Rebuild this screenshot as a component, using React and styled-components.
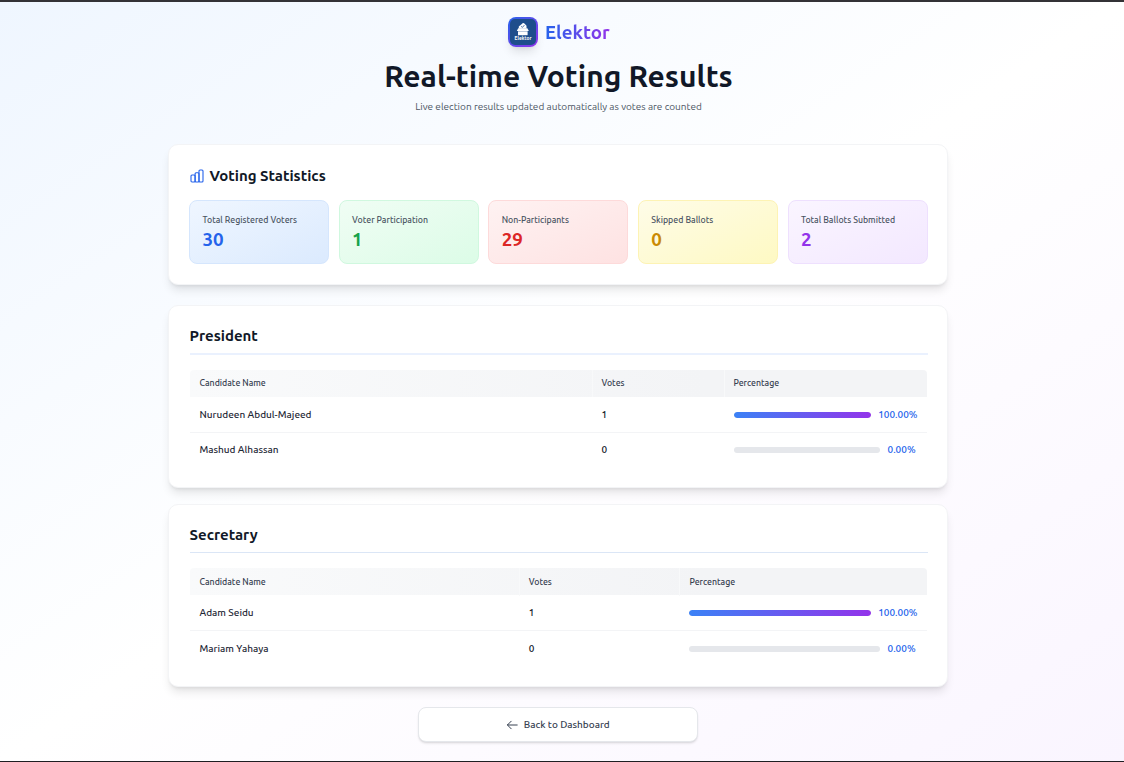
import React from "react";
import styled, { createGlobalStyle } from "styled-components";

const GlobalStyle = createGlobalStyle`
  * { box-sizing: border-box; }
  body {
    margin: 0;
    font-family: Ubuntu, "Noto Sans", "Open Sans", sans-serif;
    color: #111827;
  }
  h1, h2, p { margin: 0; }
`;

const Page = styled.div`
  height: 762px;
  overflow: hidden;
  display: flex;
  flex-direction: column;
  align-items: center;
  padding: 15px 7px 0 0;
  border-top: 2px solid #333236;
  border-bottom: 1px solid #1f1e22;
  background: linear-gradient(to bottom right, #eff6ff 0%, #ffffff 50%, #faf5ff 100%);
`;

const Brand = styled.div`
  display: flex;
  align-items: center;
  gap: 7px;
  height: 30px;
  padding-left: 0.6px;
`;

const LogoFrame = styled.div`
  display: flex;
  width: 30px;
  height: 30px;
  padding: 2px;
  border-radius: 8px;
  background: linear-gradient(to bottom right, #2563eb, #9333ea);
  box-shadow: 0 7px 10px -2px rgba(0, 0, 0, 0.1), 0 3px 4px -3px rgba(0, 0, 0, 0.1);
`;

const BrandName = styled.span`
  padding-top: 2px;
  font-size: 18.75px;
  line-height: 28px;
  font-weight: 700;
  color: transparent;
  background: linear-gradient(to right, #2563eb, #9333ea);
  background-clip: text;
  -webkit-background-clip: text;
`;

const PageTitle = styled.h1`
  margin-top: 12px;
  font-size: 30px;
  line-height: 34px;
  font-weight: 700;
  white-space: nowrap;
`;

const Subtitle = styled.p`
  margin-top: 6px;
  font-size: 10px;
  line-height: 16px;
  color: #4b5563;
  white-space: nowrap;
`;

const Content = styled.main`
  display: flex;
  flex-direction: column;
  width: 780px;
  margin: 29px 1px 0 0;
`;

const Card = styled.section`
  height: ${(p) => p.$height}px;
  margin-bottom: ${(p) => p.$gap}px;
  padding: 20px 19.5px 0 20.5px;
  border: 1px solid #f3f4f6;
  border-radius: 10px;
  background: #fff;
  box-shadow: 0 7px 10px -2px rgba(0, 0, 0, 0.1), 0 3px 4px -3px rgba(0, 0, 0, 0.12);
`;

const StatsHeading = styled.h2`
  display: flex;
  align-items: center;
  gap: 6px;
  height: 21px;
  font-size: 15px;
  line-height: 21px;
  font-weight: 700;
  white-space: nowrap;
`;

const StatGrid = styled.div`
  display: grid;
  grid-template-columns: repeat(5, 140.1px);
  gap: 9.5px;
  margin: 14px 0 0 -0.3px;
`;

const StatCard = styled.div`
  height: 64px;
  padding: 13px 0 0 12.3px;
  border: 1px solid ${(p) => p.$tone.border};
  border-radius: 8px;
  background: linear-gradient(to bottom right, ${(p) => p.$tone.from}, ${(p) => p.$tone.to});
`;

const StatLabel = styled.p`
  font-size: 8.75px;
  line-height: 13px;
  font-weight: 500;
  color: #4b5563;
  white-space: nowrap;
`;

const StatValue = styled.p`
  margin-top: 2px;
  font-size: 18.75px;
  line-height: 22px;
  font-weight: 700;
  color: ${(p) => p.$color};
`;

const PositionHeading = styled.h2`
  height: ${(p) => (p.$rule === 2 ? 29 : 28)}px;
  font-size: 15px;
  line-height: 20px;
  font-weight: 700;
  border-bottom: ${(p) => p.$rule}px solid ${(p) => (p.$rule === 2 ? "#eaf1fe" : "#dbe6f6")};
`;

const Table = styled.div`
  margin: 15px 0.2px 0 0;
`;

const TableRow = styled.div`
  display: grid;
  grid-template-columns: ${(p) => p.$columns};
  align-items: center;
  height: ${(p) => p.$height}px;
  border-bottom: ${(p) => (p.$divided ? "1px solid #f3f4f6" : "none")};
`;

const TableHead = styled(TableRow)`
  height: 27px;
  align-items: stretch;
  border-radius: 4px 4px 0 0;
  background: linear-gradient(to right, #f9fafb, #f3f4f6 70%);
`;

const HeadCell = styled.div`
  padding-left: 10px;
  font-size: 8.75px;
  line-height: ${(p) => p.$line}px;
  font-weight: 500;
  color: #374151;
  & + & { box-shadow: inset 1px 0 0 #f8f9fa; }
`;

const Cell = styled.div`
  padding-left: 10px;
  font-size: 10px;
  line-height: 14px;
  font-weight: 500;
  color: ${(p) => (p.$strong ? "#111827" : "#1f2937")};
  white-space: nowrap;
`;

const ShareCell = styled.div`
  display: flex;
  align-items: center;
  gap: 7.5px;
  padding: 0 9.8px 0 10px;
`;

const Track = styled.div`
  flex: 1;
  height: 6px;
  border-radius: 3px;
  overflow: hidden;
  background: #e5e7eb;
`;

const Fill = styled.div`
  height: 100%;
  border-radius: 3px;
  background: linear-gradient(to right, #3b82f6, #9333ea);
`;

const ShareText = styled.span`
  min-width: 30px;
  font-size: 10px;
  line-height: 14px;
  font-weight: 500;
  color: #2563eb;
`;

const BackButton = styled.button`
  display: flex;
  align-items: center;
  justify-content: center;
  gap: 5.5px;
  align-self: center;
  width: 280px;
  height: 35px;
  padding: 0;
  font: 500 10px/14px Ubuntu, "Noto Sans", "Open Sans", sans-serif;
  color: #374151;
  background: #fff;
  border: 1px solid #e5e7eb;
  border-radius: 8px;
  box-shadow: 0 2px 3px -1px rgba(0, 0, 0, 0.14), 0 1px 2px -1px rgba(0, 0, 0, 0.1);
`;

const Logo = () => (
  <svg width="26" height="26" viewBox="0 0 26 26">
    <rect width="26" height="26" rx="5" fill="#1e4e8c" />
    <path d="M8.8 9.4V7.6l3.6-3.1c.7-.6 1.4-.5 2 .1l2.1 2.2v2.6z" fill="#fff" />
    <path d="M11.2 7.3l1.2 1.1 2-2.3" fill="none" stroke="#1e4e8c" strokeWidth=".8" />
    <path d="M8.2 9.3h9.2l1.4 2.6H6.8z" fill="#fff" />
    <path d="M8 12.3h9.6v3.9H8z" fill="#fff" />
    <text x="13" y="20.9" textAnchor="middle" fontFamily="Ubuntu, sans-serif" fontSize="4.8" fontWeight="700" fill="#fff" textLength="17">
      Elektor
    </text>
  </svg>
);

const BarsIcon = () => (
  <svg width="14" height="14" viewBox="0 0 14 14" fill="none" stroke="#2563eb" strokeWidth="1.1" strokeLinejoin="round">
    <rect x="1" y="6" width="4.1" height="7" rx="1" />
    <rect x="5.1" y="3.7" width="3.9" height="9.3" rx="1" />
    <rect x="9" y="1" width="4" height="12" rx="1" />
  </svg>
);

const ArrowIcon = () => (
  <svg width="12" height="12" viewBox="0 0 12 12" fill="none" stroke="#374151" strokeWidth="1" strokeLinecap="round" strokeLinejoin="round">
    <path d="M5.2 2.2 1.4 6l3.8 3.8M1.4 6h9.8" />
  </svg>
);

const stats = [
  { label: "Total Registered Voters", value: 30, tone: { from: "#eff6ff", to: "#dbeafe", border: "#d5e6fd", text: "#2563eb" } },
  { label: "Voter Participation", value: 1, tone: { from: "#f0fdf4", to: "#dcfce7", border: "#d0f8df", text: "#16a34a" } },
  { label: "Non-Participants", value: 29, tone: { from: "#fef2f2", to: "#fee2e2", border: "#fddada", text: "#dc2626" } },
  { label: "Skipped Ballots", value: 0, tone: { from: "#fefce8", to: "#fef9c3", border: "#fdf3b4", text: "#ca8a04" } },
  { label: "Total Ballots Submitted", value: 2, tone: { from: "#faf5ff", to: "#f3e8ff", border: "#eee0fe", text: "#9333ea" } },
];

const positions = [
  {
    title: "President",
    rule: 2,
    height: 183,
    gap: 16,
    columns: "402px 132px 1fr",
    headLine: 27,
    rows: [
      { name: "Nurudeen Abdul-Majeed", votes: 1, share: 100, height: 36 },
      { name: "Mashud Alhassan", votes: 0, share: 0, height: 34 },
    ],
  },
  {
    title: "Secretary",
    rule: 1,
    height: 183,
    gap: 20,
    columns: "329.3px 160.7px 1fr",
    headLine: 28,
    rows: [
      { name: "Adam Seidu", votes: 1, share: 100, height: 36 },
      { name: "Mariam Yahaya", votes: 0, share: 0, height: 35 },
    ],
  },
];

function PositionCard({ position }) {
  const { title, rule, height, gap, columns, headLine, rows } = position;
  return (
    <Card $height={height} $gap={gap}>
      <PositionHeading $rule={rule}>{title}</PositionHeading>
      <Table>
        <TableHead $columns={columns}>
          <HeadCell $line={headLine}>Candidate Name</HeadCell>
          <HeadCell $line={headLine}>Votes</HeadCell>
          <HeadCell $line={headLine}>Percentage</HeadCell>
        </TableHead>
        {rows.map((row, i) => (
          <TableRow key={row.name} $columns={columns} $height={row.height} $divided={i < rows.length - 1}>
            <Cell>{row.name}</Cell>
            <Cell $strong>{row.votes}</Cell>
            <ShareCell>
              <Track>
                <Fill style={{ width: `${row.share}%` }} />
              </Track>
              <ShareText>{row.share.toFixed(2)}%</ShareText>
            </ShareCell>
          </TableRow>
        ))}
      </Table>
    </Card>
  );
}

export default function App() {
  return (
    <>
      <GlobalStyle />
      <Page>
        <Brand>
          <LogoFrame>
            <Logo />
          </LogoFrame>
          <BrandName>Elektor</BrandName>
        </Brand>
        <PageTitle>Real-time Voting Results</PageTitle>
        <Subtitle>Live election results updated automatically as votes are counted</Subtitle>
        <Content>
          <Card $height={141} $gap={20}>
            <StatsHeading>
              <BarsIcon />
              Voting Statistics
            </StatsHeading>
            <StatGrid>
              {stats.map((s) => (
                <StatCard key={s.label} $tone={s.tone}>
                  <StatLabel>{s.label}</StatLabel>
                  <StatValue $color={s.tone.text}>{s.value}</StatValue>
                </StatCard>
              ))}
            </StatGrid>
          </Card>
          {positions.map((p) => (
            <PositionCard key={p.title} position={p} />
          ))}
          <BackButton>
            <ArrowIcon />
            Back to Dashboard
          </BackButton>
        </Content>
      </Page>
    </>
  );
}
